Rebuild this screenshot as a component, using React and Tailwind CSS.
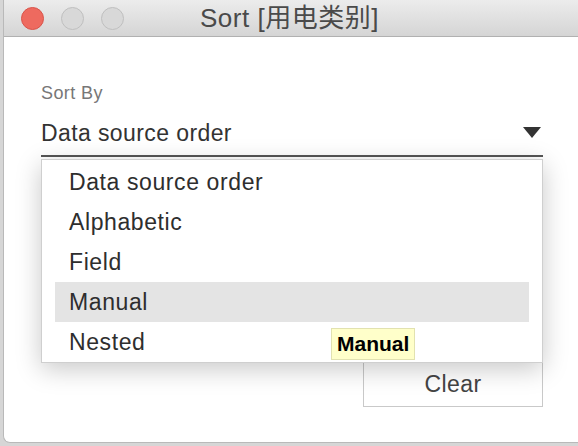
export default function App() {
  const items = ["Data source order", "Alphabetic", "Field", "Manual", "Nested"];

  return (
    <div
      className="w-[578px] h-[446px] overflow-hidden bg-[#d6d6d6]"
      style={{ fontFamily: '"Liberation Sans", "Noto Sans CJK SC", sans-serif' }}
    >
      {/* window */}
      <div className="ml-[3px] w-[600px] h-[443px] flex flex-col bg-white rounded-b-[7px] border-l border-b border-[#b9b9b9] overflow-hidden">
        {/* title bar */}
        <div className="relative h-[37px] flex items-center bg-gradient-to-b from-[#ececec] to-[#d5d5d5] border-b border-[#b1b1b1]">
          <div className="flex items-center gap-[17px] pl-[17px]">
            <span className="w-[23px] h-[23px] rounded-full bg-[#ee6a5f] border border-[#d9544a]" />
            <span className="w-[23px] h-[23px] rounded-full bg-[#d8d8d8] border border-[#bfbfbf]" />
            <span className="w-[23px] h-[23px] rounded-full bg-[#d8d8d8] border border-[#bfbfbf]" />
          </div>
          <div className="absolute left-[196px] top-0 h-[36px] flex items-center text-[26px] tracking-[0.5px] text-[#4a4a4a]">
            Sort [用电类别]
          </div>
        </div>

        {/* body */}
        <div className="relative flex-1 pl-[37px] pt-[46px]">
          <div className="w-[502px]">
            <div className="text-[18px] leading-[20px] text-[#777] tracking-[0.4px]">Sort By</div>
            <div className="mt-[17px] flex items-start justify-between pb-[8px] border-b-2 border-[#555]">
              <span className="text-[23px] leading-[27px] text-[#333] tracking-[0.4px]">Data source order</span>
              <svg width="18" height="11" viewBox="0 0 18 11" className="mt-[7px] mr-[2px]">
                <polygon points="0,0 18,0 9,11" fill="#333" />
              </svg>
            </div>
            <div className="mt-[205px] ml-[322px] w-[180px] h-[45px] border border-[#c9c9c9] flex items-center justify-center text-[23px] tracking-[0.4px] text-[#444]">
              Clear
            </div>
          </div>

          {/* open dropdown list */}
          <div className="absolute left-[37px] top-[122px] w-[502px] h-[204px] bg-white border border-[#cfcfcf] pt-[2px] px-[13px] shadow-[0_6px_24px_rgba(0,0,0,0.22)]">
            {items.map((it) => (
              <div
                key={it}
                className={`h-[40px] flex items-center pl-[14px] text-[23px] text-[#2e2e2e] tracking-[0.6px] ${
                  it === "Manual" ? "bg-[#e4e4e4]" : ""
                }`}
              >
                {it}
              </div>
            ))}
          </div>

          {/* tooltip */}
          <div className="absolute left-[327px] top-[291px] h-[32px] px-[5px] flex items-center bg-[#ffffca] border border-[#e2e2b0] text-[21px] font-bold text-black">
            Manual
          </div>
        </div>
      </div>
    </div>
  );
}
